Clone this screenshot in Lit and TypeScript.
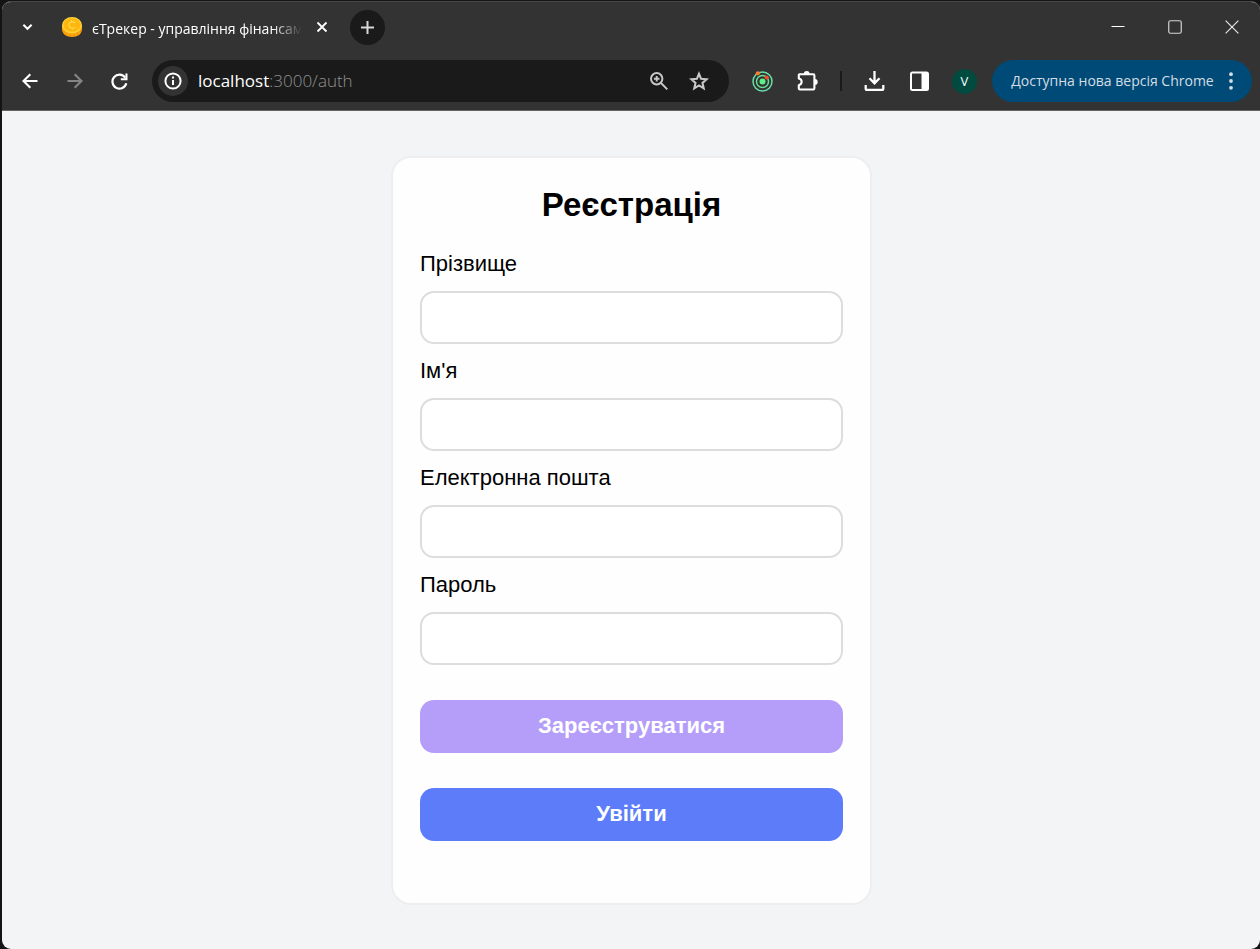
import { LitElement, html, css, svg } from "lit";
import { customElement } from "lit/decorators.js";

const chevron = svg`<svg width="11" height="8" viewBox="0 0 12 8"><path d="M1.5 1.5 6 6 10.5 1.5" fill="none" stroke="#fff" stroke-width="2.2"/></svg>`;
const coin = svg`<svg width="20" height="20" viewBox="0 0 20 20">
  <path d="M0 8.500V12C0 17 4.500 20 10 20S20 17 20 12V8.500Z" fill="#fda50d"/>
  <path d="M2 14v2M5 16v2M8.500 17v2M12 17v2M15.500 15.500v2.500M18.300 13v2" stroke="#f8900a" stroke-width="1"/>
  <ellipse cx="10" cy="8.200" rx="10" ry="8.200" fill="#ffd43a"/>
  <ellipse cx="10" cy="8" rx="8.600" ry="6.800" fill="#feb70e"/>
  <path d="M13 5.800C11.500 4.300 7 4.500 7 8s4.500 4 6.200 2M9.500 3.300v1.500M10.500 10.800v1.600" fill="none" stroke="#ffdf50" stroke-width="1.100"/></svg>`;
const tabClose = svg`<svg width="12" height="12" viewBox="0 0 12 12"><path d="m1.500 1.500 9 9m0-9-9 9" stroke="#fff" stroke-width="1.800"/></svg>`;
const plus = svg`<svg width="13" height="13" viewBox="0 0 13 13"><path d="M6.500 0v13M0 6.500h13" stroke="#d8d8d8" stroke-width="2"/></svg>`;
const minimize = svg`<svg width="14" height="14" viewBox="0 0 14 14"><path d="M.5 6.500h13" stroke="#fff"/></svg>`;
const maximize = svg`<svg width="14" height="14" viewBox="0 0 14 14"><rect x=".75" y=".75" width="12.500" height="12.500" rx="1.800" fill="none" stroke="#d5d5d5" stroke-width="1.200"/></svg>`;
const winClose = svg`<svg width="14" height="14" viewBox="0 0 14 14"><path d="m.6.6 12.800 12.800m0-12.800L.6 13.400" stroke="#e4e4e4" stroke-width="1.200"/></svg>`;
const back = svg`<svg width="16" height="16" viewBox="0 0 16 16"><path d="M15.500 8H2M8.300 1.200 1.500 8l6.800 6.800" fill="none" stroke="#fff" stroke-width="2.100"/></svg>`;
const forward = svg`<svg width="16" height="16" viewBox="0 0 16 16"><path d="M.5 8H14M7.700 1.200 14.500 8l-6.800 6.800" fill="none" stroke="#858585" stroke-width="2.100"/></svg>`;
const reload = svg`<svg width="17" height="17" viewBox="0 0 17 17"><path d="M14.200 4.600A7 7 0 1 0 15.300 10.200" fill="none" stroke="#fff" stroke-width="2.200"/><path d="M16.500.5V7.300H9.800V5.200h4.600V.5Z" fill="#fff"/></svg>`;
const info = svg`<svg width="18" height="18" viewBox="0 0 18 18"><circle cx="9" cy="9" r="7.600" fill="none" stroke="#fff" stroke-width="2"/><path d="M9 8v5M9 4.600v2" stroke="#fff" stroke-width="2"/></svg>`;
const magnifier = svg`<svg width="18" height="18" viewBox="0 0 18 18"><circle cx="6.700" cy="6.700" r="5.700" fill="none" stroke="#c8c8c8" stroke-width="2"/><path d="m11 11 6.300 6.300M6.700 3.900v5.600M3.900 6.700h5.600" stroke="#c8c8c8" stroke-width="1.900"/></svg>`;
const star = svg`<svg width="20" height="20" viewBox="0 0 20 20"><path d="m10 2.800 2.100 5 5.500.5-4.100 3.600 1.200 5.400L10 14.400l-4.700 2.900 1.200-5.400-4.100-3.600 5.500-.5Z" fill="none" stroke="#c8c8c8" stroke-width="2.100"/></svg>`;
const orbit = svg`<svg width="21" height="22" viewBox="0 0 21 22"><g fill="none" stroke-width="1.500"><circle cx="10.500" cy="11.500" r="9.500" stroke="#66dfa9"/><circle cx="10.500" cy="11.500" r="6" stroke="#63e292"/></g><circle cx="10.500" cy="11.500" r="3" fill="#5cf08d"/><circle cx="5.800" cy="3.300" r="2.100" fill="#f57c2c"/><circle cx="14.700" cy="7.500" r="2.100" fill="#f04e2b"/></svg>`;
const puzzle = svg`<svg width="22" height="22" viewBox="0 0 22 22"><path d="M2.600 4.200H16.200Q17.400 4.200 17.400 5.400V18.300Q17.400 19.500 16.200 19.500H3Q1.800 19.500 1.800 18.300V15.200C5.600 14.400 5.600 9.300 1.800 8.500V5Q1.800 4.200 2.600 4.200Z" fill="none" stroke="#fff" stroke-width="2.100" stroke-linejoin="round"/><path d="M6.800 4a2.900 2.900 0 0 1 5.800 0ZM17.800 9a2.900 2.900 0 0 1 0 5.800Z" fill="#fff"/></svg>`;
const download = svg`<svg width="22" height="22" viewBox="0 0 22 22"><path d="M10.500 1v12M5.500 8.300l5 5 5-5M1.700 15v3.400Q1.700 19.800 3.100 19.800H17.900Q19.300 19.800 19.300 18.400V15" fill="none" stroke="#fff" stroke-width="2.300"/></svg>`;
const panel = svg`<svg width="19" height="20" viewBox="0 0 19 20"><rect x="1" y="1.500" width="17" height="17.500" rx="1.500" fill="none" stroke="#fff" stroke-width="2"/><path d="M11.500 1.500H18v17h-6.500Z" fill="#fff"/></svg>`;
const dots = svg`<svg width="4" height="18" viewBox="0 0 4 18"><g fill="#d5dde4"><circle cx="2" cy="2.200" r="1.900"/><circle cx="2" cy="9" r="1.900"/><circle cx="2" cy="15.800" r="1.900"/></g></svg>`;

@customElement("browser-chrome")
class BrowserChrome extends LitElement {
  static styles = css`
    :host { display: block; background: #333; color: #fff; border-bottom: 1px solid #636363; font-family: "Open Sans", "Noto Sans", sans-serif; }
    svg { display: block; flex: none; }
    button { appearance: none; border: 0; padding: 0; margin: 0; background: none; color: inherit; font: inherit; display: flex; align-items: center; justify-content: center; flex: none; }
    .tabs { display: flex; align-items: center; height: 50px; padding: 0 0 0 3px; }
    .tool { width: 45px; height: 42px; }
    .tab { display: flex; align-items: center; gap: 10px; padding-left: 12px; }
    .title { width: 209px; overflow: hidden; white-space: nowrap; font-size: 14px; line-height: 24px; padding-top: 3px; mask-image: linear-gradient(90deg, #000 180px, transparent 210px); }
    .close { width: 22px; height: 22px; }
    .new { width: 35px; height: 35px; border-radius: 50%; background: #1a1a1a; margin-left: 17px; }
    .controls { display: flex; margin-left: auto; }
    .controls button { width: 57px; height: 48px; }
    .bar { display: flex; align-items: center; height: 42px; padding: 8px 8px 8px 5px; }
    .address { display: flex; align-items: center; flex: 1; min-width: 0; height: 42px; border-radius: 21px; background: #1a1a1a; margin-left: 10px; padding: 0 10px 0 6px; box-sizing: border-box; }
    .site { width: 30px; height: 30px; border-radius: 50%; background: #333; }
    .url { flex: 1; min-width: 0; padding-left: 10px; font-size: 17px; line-height: 26px; color: #929292; white-space: nowrap; overflow: hidden; font-weight: 300; text-decoration: none; }
    .host { color: #fff; font-weight: 400; }
    .action { width: 40px; height: 40px; }
    .extras { display: flex; align-items: center; margin-left: 11px; }
    .divider { width: 2px; height: 20px; background: #1a1a1a; margin: 0 10px; }
    .avatar { width: 25px; height: 25px; border-radius: 50%; background: #004a40; font-size: 13px; margin: 0 15px 0 10px; }
    .update { height: 42px; width: 260px; gap: 15px; border-radius: 21px; background: #004a77; color: #d5dde4; font-size: 14px; white-space: nowrap; }
    .update span { padding-bottom: 2px; }
  `;

  render() {
    return html`
      <div class="tabs">
        <button class="tool" aria-label="Пошук вкладок">${chevron}</button>
        <div class="tab">
          ${coin}<span class="title">єТрекер - управління фінансами</span>
          <button class="close" aria-label="Закрити вкладку">${tabClose}</button>
        </div>
        <button class="new" aria-label="Нова вкладка">${plus}</button>
        <div class="controls">
          <button aria-label="Згорнути">${minimize}</button>
          <button aria-label="Розгорнути">${maximize}</button>
          <button aria-label="Закрити">${winClose}</button>
        </div>
      </div>
      <div class="bar">
        <button class="tool" aria-label="Назад">${back}</button>
        <button class="tool" aria-label="Вперед">${forward}</button>
        <button class="tool" aria-label="Оновити">${reload}</button>
        <div class="address">
          <button class="site" aria-label="Про сайт">${info}</button>
          <a class="url" href="#auth"><span class="host">localhost</span>:3000/auth</a>
          <button class="action" aria-label="Масштаб">${magnifier}</button>
          <button class="action" aria-label="Закладка">${star}</button>
        </div>
        <div class="extras">
          <button class="tool" aria-label="Розширення">${orbit}</button>
          <button class="tool" aria-label="Усі розширення">${puzzle}</button>
          <span class="divider"></span>
          <button class="tool" aria-label="Завантаження">${download}</button>
          <button class="tool" aria-label="Бічна панель">${panel}</button>
          <button class="avatar" aria-label="Профіль">V</button>
          <button class="update"><span>Доступна нова версія Chrome</span>${dots}</button>
        </div>
      </div>
    `;
  }
}

@customElement("auth-form")
class AuthForm extends LitElement {
  static styles = css`
    :host { display: block; width: 481px; max-width: 100%; }
    .card { display: flex; flex-direction: column; background: #fefefe; border: 2px solid #eee; border-radius: 20px; padding: 27px 27px 62px; font-size: 22px; line-height: 25px; color: #000; }
    .heading { margin: 0 0 27px; font-size: 33px; line-height: 39px; font-weight: 700; text-align: center; }
    .fields { display: flex; flex-direction: column; gap: 14px; }
    .field { display: flex; flex-direction: column; gap: 15px; }
    .input { box-sizing: border-box; width: 100%; height: 53px; border: 2px solid #ddd; border-radius: 14px; background: #fff; padding: 0 14px; font: inherit; outline: none; }
    .button { box-sizing: border-box; height: 53px; margin-top: 35px; padding: 0 0 2px; border: 0; border-radius: 14px; color: #fff; font: inherit; font-weight: 700; }
    .register { background: #b49ef9; }
    .login { background: #5c7cfa; }
  `;

  private fields = [
    { id: "surname", label: "Прізвище", type: "text" },
    { id: "name", label: "Ім'я", type: "text" },
    { id: "email", label: "Електронна пошта", type: "email" },
    { id: "password", label: "Пароль", type: "password" },
  ];

  render() {
    return html`
      <form class="card" @submit=${(e: Event) => e.preventDefault()}>
        <h1 class="heading">Реєстрація</h1>
        <div class="fields">
          ${this.fields.map((f) => html`
            <div class="field">
              <label for=${f.id}>${f.label}</label>
              <input class="input" id=${f.id} type=${f.type} />
            </div>`)}
        </div>
        <button class="button register" type="submit">Зареєструватися</button>
        <button class="button login" type="button">Увійти</button>
      </form>
    `;
  }
}

@customElement("app-root")
class AppRoot extends LitElement {
  static styles = css`
    :host { display: block; box-sizing: border-box; min-height: 100vh; background: #141414; padding: 1px 0 0 2px; font-family: "Liberation Sans", Arial, sans-serif; }
    .window { display: flex; flex-direction: column; box-sizing: border-box; min-height: calc(100vh - 1px); border-top: 1px solid #484848; border-radius: 9px; overflow: hidden; background: #f2f4f6; }
    .page { flex: 1; display: flex; justify-content: center; align-items: flex-start; padding: 45px 0 44px 1px; }
  `;

  render() {
    return html`
      <div class="window">
        <browser-chrome></browser-chrome>
        <main class="page"><auth-form></auth-form></main>
      </div>
    `;
  }
}
